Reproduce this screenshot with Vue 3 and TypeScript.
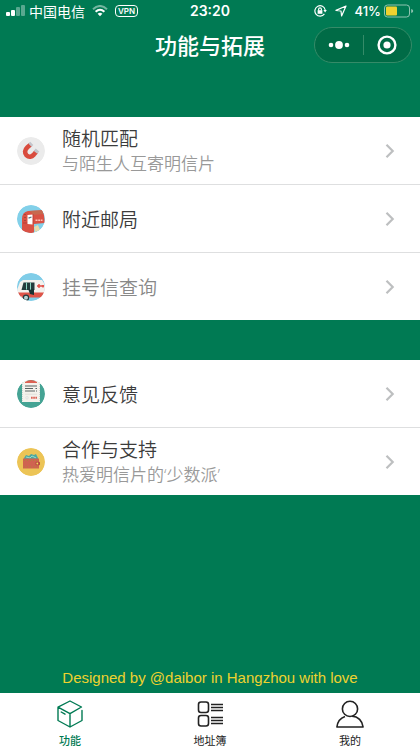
<script setup lang="ts">
interface Entry {
  icon: 'magnet' | 'mailbox' | 'truck' | 'note' | 'wallet'
  title: string
  note?: string
  muted?: boolean
}

const groups: Entry[][] = [
  [
    { icon: 'magnet', title: '随机匹配', note: '与陌生人互寄明信片' },
    { icon: 'mailbox', title: '附近邮局' },
    { icon: 'truck', title: '挂号信查询', muted: true },
  ],
  [
    { icon: 'note', title: '意见反馈' },
    { icon: 'wallet', title: '合作与支持', note: '热爱明信片的‘少数派’' },
  ],
]
</script>

<template>
  <div class="page">
    <header>
      <div class="status">
        <div class="side">
          <svg class="signal" width="20" height="12" viewBox="0 0 20 12" fill="#fff">
            <rect x="0" y="7" width="4" height="4" rx="1" />
            <rect x="5" y="5" width="4" height="6" rx="1" />
            <g opacity=".35"><rect x="10" y="2" width="4" height="9" rx="1" /><rect x="15" y="0" width="4" height="11" rx="1" /></g>
          </svg>
          <span class="carrier">中国电信</span>
          <svg class="wifi" width="16" height="12" viewBox="0 0 16 12" fill="none" stroke="#fff" stroke-width="2">
            <path d="M1 4.2Q8-2.2 15 4.2" opacity=".45" />
            <path d="M3.6 6.8Q8 2.8 12.4 6.8" />
            <path d="M5.6 8.8Q8 6.6 10.4 8.8L8 11.3Z" fill="#fff" stroke="none" />
          </svg>
          <span class="vpn">VPN</span>
        </div>
        <span class="time">23:20</span>
        <div class="side end">
          <svg width="13" height="12" viewBox="0 0 13 12" fill="none" stroke="#fff" stroke-width="1.2">
            <path d="M10.4 8.8A5.2 5.2 0 1 1 11.2 5" />
            <path d="M9.4 5h3.4L11.1 7.4Z" fill="#fff" stroke="none" />
            <rect x="3.6" y="5.2" width="4.8" height="3.6" fill="#fff" stroke="none" />
            <path d="M4.6 5.4V4.2a1.4 1.4 0 0 1 2.8 0v1.2" />
          </svg>
          <svg class="arrow" width="12" height="12" viewBox="0 0 12 12" fill="none" stroke="#fff" stroke-width="1.2" stroke-linejoin="round">
            <path d="M11 1 1 5.4 6 6 6.6 11Z" />
          </svg>
          <span class="percent">41%</span>
          <svg width="30" height="14" viewBox="0 0 30 14">
            <rect x=".5" y="1" width="25" height="12" rx="3" fill="none" stroke="#8fc4b1" />
            <rect x="2" y="2.5" width="11" height="9" rx="1" fill="#eed22f" />
            <path d="M27.2 5v4q2-.6 2-2t-2-2Z" fill="#8fc4b1" />
          </svg>
        </div>
      </div>
      <div class="nav">
        <h1>功能与拓展</h1>
        <div class="capsule">
          <button type="button" aria-label="更多">
            <svg width="22" height="20" viewBox="0 0 22 20" fill="#fff"><circle cx="3" cy="10" r="2.3" /><circle cx="11" cy="10" r="3.9" /><circle cx="19" cy="10" r="2.3" /></svg>
          </button>
          <button type="button" aria-label="关闭">
            <svg width="20" height="20" viewBox="0 0 20 20"><circle cx="10" cy="10" r="8.4" fill="none" stroke="#fff" stroke-width="2.4" /><circle cx="10" cy="10" r="3.6" fill="#fff" /></svg>
          </button>
        </div>
      </div>
    </header>

    <main>
      <ul v-for="(group, g) in groups" :key="g">
        <li v-for="entry in group" :key="entry.title">
          <a href="#" :class="{ muted: entry.muted }">
            <svg class="badge" viewBox="0 0 28 28">
              <template v-if="entry.icon === 'magnet'">
                <circle cx="14" cy="14" r="14" fill="#ebebeb" />
                <path d="M13.4 7.6 10.3 10.4C7.6 13 7.4 16 9.6 18.4 12 20.7 14.6 20 16.8 17.6L19.2 14.7" fill="none" stroke="#d94b3d" stroke-width="4.6" />
                <path d="m12.9 8.1 1.9-1.8M18.6 15.4l1.9-2.4" stroke="#c3c5cb" stroke-width="4.6" />
              </template>
              <template v-else-if="entry.icon === 'mailbox'">
                <circle cx="14" cy="14" r="14" fill="#82d0e9" />
                <path d="M5 26V14Q5 7 11 6L25 5.2Q28 10 27.5 18L17 19v8.5Q10 29 5 26Z" fill="#da5144" />
                <path d="M12 6 25 5.3 26.4 9 16 10Q15 7 12 6Z" fill="#c7684f" />
                <path d="M16 9v10M6 18h10" stroke="#b83f36" stroke-width="1" />
                <path d="m10.5 10 5-.6v10l-5-.3Z" fill="#fff" />
                <path d="M11.5 13.2 14.5 12" stroke="#557784" stroke-width="1.3" />
                <path d="M8 9v9" stroke="#793832" stroke-dasharray="1 2" />
                <path d="M18.5 15.3h7" stroke="#ffc0b6" stroke-width="1.6" stroke-dasharray="2 .7" />
                <path d="m17 22 4-2 2 5-5 2Z" fill="#ead9ab" />
              </template>
              <template v-else-if="entry.icon === 'truck'">
                <circle cx="14" cy="14" r="14" fill="#80cde8" />
                <path d="M3 9 6 7h19q2 2 3 7v6H0v-3Z" fill="#f4f1ed" />
                <path d="M0 19.5h28q-.5 3.5-3 5H2q-2-1-2-5Z" fill="#df5448" />
                <path d="M6.5 9.5h11V17h-13Z" fill="#233b3c" />
                <path d="M9.5 9.5v7M13.5 9.5v8" stroke="#8dd6c2" />
                <path d="m11.5 17 1.5 4 4 1v-6" fill="#193333" />
                <path d="M20 13h7M22 11v4M26 12v2.5" stroke="#e14a42" stroke-width="1.4" />
                <circle cx="9" cy="24.8" r="2.6" fill="#b8d3d3" stroke="#263c3e" stroke-width="1.2" />
                <path d="M0 24.5h5" stroke="#ddd" stroke-width="2" />
              </template>
              <template v-else-if="entry.icon === 'note'">
                <circle cx="14" cy="14" r="14" fill="#45a394" />
                <path d="M5 1h18v21H5Z" fill="#f4f2ec" />
                <path d="M8 2q6-4 12 0v1H8Z" fill="#dc6253" />
                <path d="M5.5 2v20M22.5 2v20" stroke="#cbd8d1" stroke-dasharray="1 1" />
                <path d="M8 6h12M8 8.5h8M8 11h10M18.5 8.5H20M19 11h1" stroke="#596463" stroke-width="1.1" />
                <path d="M8 14.2h12" stroke="#d9d9d2" stroke-width=".7" />
                <path d="M14 17.8h6" stroke="#dc6457" stroke-width="2" stroke-dasharray="1.7 .5" />
                <circle cx="10" cy="17.8" r="1.3" fill="none" stroke="#ddd" stroke-width=".7" />
              </template>
              <template v-else>
                <circle cx="14" cy="14" r="14" fill="#ecc456" />
                <path d="m7 10 2-3 3 1 2-2 3 1 2-1 2 4v3H7Z" fill="#4ca8a1" />
                <path d="m9 9 4 1 2-2 4 2" fill="none" stroke="#9cdbc6" />
                <path d="M6 10.5h16v10H6Z" fill="#cf6350" />
                <path d="M7 12.5h14M7 18.8h14" stroke="#a88a38" stroke-width=".8" stroke-dasharray="1 2" />
                <rect x="18.5" y="13.7" width="4.5" height="3.6" rx="1" fill="#b74b40" /><circle cx="20.3" cy="15.5" r=".9" fill="#f3d65b" />
              </template>
            </svg>
            <span class="text">
              <span class="title">{{ entry.title }}</span>
              <span v-if="entry.note" class="note">{{ entry.note }}</span>
            </span>
            <svg class="chevron" width="10" height="16" viewBox="0 0 10 16" fill="none" stroke="#bdbfc0" stroke-width="2.2"><path d="m1.5 1.8 6.2 6.2-6.2 6.2" /></svg>
          </a>
        </li>
      </ul>
    </main>

    <p class="credit">Designed by @daibor in Hangzhou with love</p>

    <nav class="tabs">
      <a href="#" class="active" aria-current="page">
        <svg width="28" height="28" viewBox="0 0 28 28" fill="none" stroke="currentColor" stroke-width="1.4" stroke-linejoin="round" stroke-linecap="round">
          <path d="M26 10.5v10L14 27 2 20.5V7.2L14 1l11.5 6L14 13.7 2 7.2M14 13.7V27M5.2 12 9 14.2" />
        </svg>
        <span>功能</span>
      </a>
      <a href="#">
        <svg width="28" height="28" viewBox="0 0 28 28" fill="none" stroke="currentColor" stroke-width="1.6">
          <rect x="2.5" y="2" width="10" height="10.5" rx="2.5" /><rect x="2.5" y="15.5" width="10" height="10.5" rx="2.5" />
          <path d="M15 4.5h12M15 7.5h12M15 10.5h12M15 17.5h12M15 20.5h12M15 23.5h12" />
        </svg>
        <span>地址簿</span>
      </a>
      <a href="#">
        <svg width="28" height="28" viewBox="0 0 28 28" fill="none" stroke="currentColor" stroke-width="1.6" stroke-linejoin="round">
          <circle cx="14" cy="8.9" r="7.6" /><path d="M9 16.5C4.5 18 1.5 22 .9 27h26.2C26.5 21 22 16.2 16 16.2" />
        </svg>
        <span>我的</span>
      </a>
    </nav>
  </div>
</template>

<style>
body {
  background: #007a53;
}
</style>

<style scoped>
.page {
  display: flex;
  flex-direction: column;
  min-height: 100vh;
  background: #007a53;
  font-family: "Noto Sans CJK SC", sans-serif;
}
.status {
  display: grid;
  grid-template-columns: 1fr auto 1fr;
  align-items: center;
  height: 22px;
  padding: 0 6px;
  color: #fff;
  font-size: 14px;
  line-height: 22px;
}
.side {
  display: flex;
  align-items: center;
}
.end {
  justify-content: flex-end;
}
.carrier {
  margin: 0 7px 0 3px;
}
.vpn {
  margin-left: 7px;
  padding: 0 2px;
  border: 1px solid #fff;
  border-radius: 4px;
  font: 600 8px/10px Inter, sans-serif;
}
.time {
  font: 600 14px/22px Inter, sans-serif;
}
.arrow {
  margin: 0 7px 0 8px;
}
.percent {
  margin-right: 3px;
  font: 500 13px/22px Inter, sans-serif;
}
.nav {
  display: grid;
  grid-template-columns: 1fr auto 1fr;
  align-items: center;
  height: 46px;
  padding: 0 8px;
}
h1 {
  grid-column: 2;
  margin: 0;
  padding-bottom: 2px;
  color: #fff;
  font-size: 22px;
  font-weight: 500;
  line-height: 32px;
}
.capsule {
  display: flex;
  justify-self: end;
  box-sizing: border-box;
  width: 98px;
  height: 36px;
  padding: 7px 0;
  border: 1px solid #358b68;
  border-radius: 18px;
  background: #006b46;
}
.capsule button {
  display: flex;
  flex: 1;
  align-items: center;
  justify-content: center;
  padding: 0;
  border: 0;
  background: none;
}
.capsule button + button {
  border-left: 1px solid #358b68;
}
main {
  display: grid;
  gap: 40px;
  margin-top: 49px;
}
ul {
  margin: 0;
  padding: 0;
  background: #fff;
  list-style: none;
}
li + li {
  border-top: 1px solid #dedfe0;
}
li a {
  display: flex;
  align-items: center;
  box-sizing: border-box;
  height: 67px;
  padding: 0 25px 0 17px;
  color: #3c3c3c;
  text-decoration: none;
}
.badge {
  width: 28px;
  height: 28px;
  border-radius: 50%;
}
.text {
  display: flex;
  flex: 1;
  flex-direction: column;
  margin-left: 17px;
}
.title {
  font-size: 19px;
  font-weight: 350;
  line-height: 26px;
}
.note {
  color: #999;
  font-family: "Open Sans", "Noto Sans CJK SC", sans-serif;
  font-size: 17px;
  font-weight: 350;
  line-height: 26px;
}
.muted {
  color: #888;
}
.credit {
  margin: auto 0 6px;
  color: #eed22f;
  font: 15px/18px "Liberation Sans", sans-serif;
  text-align: center;
}
.tabs {
  display: grid;
  grid-template-columns: repeat(3, 1fr);
  height: 54px;
  background: #fff;
}
.tabs a {
  display: flex;
  flex-direction: column;
  align-items: center;
  gap: 4px;
  padding-top: 7px;
  color: #222;
  font-size: 11px;
  line-height: 16px;
  text-decoration: none;
}
.tabs .active {
  color: #007a53;
  font-weight: 500;
}
</style>
